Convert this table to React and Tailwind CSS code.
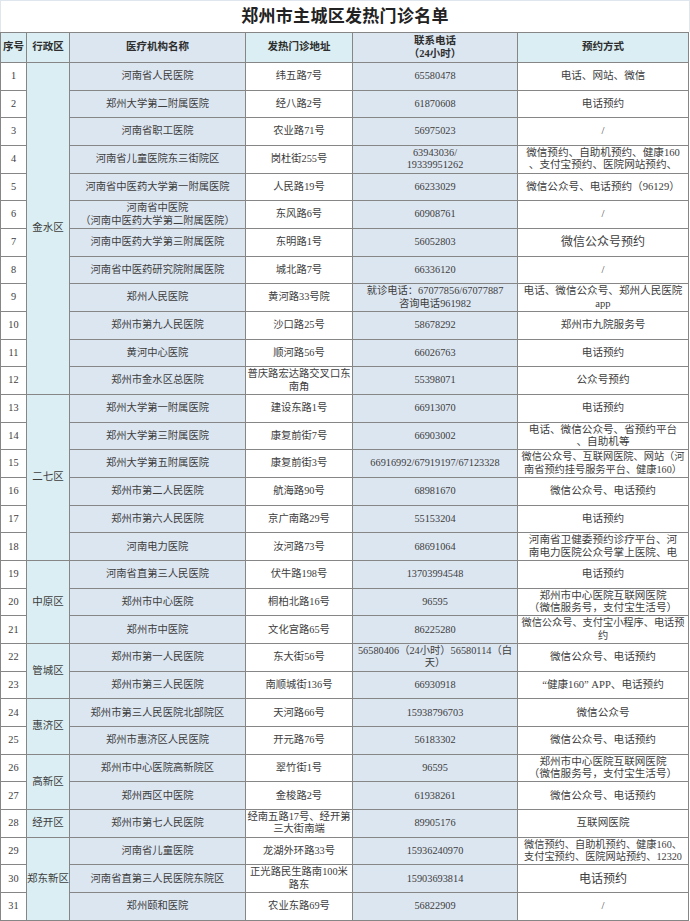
import React from 'react';

const rows = [
  { n: 1, name: '河南省人民医院', addr: '纬五路7号', tel: '65580478', way: '电话、网站、微信' },
  { n: 2, name: '郑州大学第二附属医院', addr: '经八路2号', tel: '61870608', way: '电话预约' },
  { n: 3, name: '河南省职工医院', addr: '农业路71号', tel: '56975023', way: '/' },
  { n: 4, name: '河南省儿童医院东三街院区', addr: '岗杜街255号', tel: ['63943036/', '19339951262'], way: ['微信预约、自助机预约、健康160', '、支付宝预约、医院网站预约、'] },
  { n: 5, name: '河南省中医药大学第一附属医院', addr: '人民路19号', tel: '66233029', way: '微信公众号、电话预约（96129）' },
  { n: 6, name: ['河南省中医院', '（河南中医药大学第二附属医院）'], addr: '东风路6号', tel: '60908761', way: '/' },
  { n: 7, name: '河南中医药大学第三附属医院', addr: '东明路1号', tel: '56052803', way: '微信公众号预约', big: true },
  { n: 8, name: '河南省中医药研究院附属医院', addr: '城北路7号', tel: '66336120', way: '/' },
  { n: 9, name: '郑州人民医院', addr: '黄河路33号院', tel: ['就诊电话：67077856/67077887', '咨询电话961982'], way: ['电话、微信公众号、郑州人民医院', 'app'] },
  { n: 10, name: '郑州市第九人民医院', addr: '沙口路25号', tel: '58678292', way: '郑州市九院服务号' },
  { n: 11, name: '黄河中心医院', addr: '顺河路56号', tel: '66026763', way: '电话预约' },
  { n: 12, name: '郑州市金水区总医院', addr: ['普庆路宏达路交叉口东', '南角'], tel: '55398071', way: '公众号预约' },
  { n: 13, name: '郑州大学第一附属医院', addr: '建设东路1号', tel: '66913070', way: '电话预约' },
  { n: 14, name: '郑州大学第三附属医院', addr: '康复前街7号', tel: '66903002', way: ['电话、微信公众号、省预约平台', '、自助机等'] },
  { n: 15, name: '郑州大学第五附属医院', addr: '康复前街3号', tel: '66916992/67919197/67123328', way: ['微信公众号、互联网医院、网站（河', '南省预约挂号服务平台、健康160）'], small: true },
  { n: 16, name: '郑州市第二人民医院', addr: '航海路90号', tel: '68981670', way: '微信公众号、电话预约' },
  { n: 17, name: '郑州市第六人民医院', addr: '京广南路29号', tel: '55153204', way: '电话预约' },
  { n: 18, name: '河南电力医院', addr: '汝河路73号', tel: '68691064', way: ['河南省卫健委预约诊疗平台、河', '南电力医院公众号掌上医院、电'] },
  { n: 19, name: '河南省直第三人民医院', addr: '伏牛路198号', tel: '13703994548', way: '电话预约' },
  { n: 20, name: '郑州市中心医院', addr: '桐柏北路16号', tel: '96595', way: ['郑州市中心医院互联网医院', '（微信服务号，支付宝生活号）'] },
  { n: 21, name: '郑州市中医院', addr: '文化宫路65号', tel: '86225280', way: ['微信公众号、支付宝小程序、电话预', '约'], small: true },
  { n: 22, name: '郑州市第一人民医院', addr: '东大街56号', tel: ['56580406（24小时）56580114（白', '天）'], way: '微信公众号、电话预约' },
  { n: 23, name: '郑州市第三人民医院', addr: '南顺城街136号', tel: '66930918', way: '“健康160” APP、电话预约' },
  { n: 24, name: '郑州市第三人民医院北部院区', addr: '天河路66号', tel: '15938796703', way: '微信公众号' },
  { n: 25, name: '郑州市惠济区人民医院', addr: '开元路76号', tel: '56183302', way: '微信公众号、电话预约' },
  { n: 26, name: '郑州市中心医院高新院区', addr: '翠竹街1号', tel: '96595', way: ['郑州市中心医院互联网医院', '（微信服务号，支付宝生活号）'] },
  { n: 27, name: '郑州西区中医院', addr: '金梭路2号', tel: '61938261', way: '微信公众号、电话预约' },
  { n: 28, name: '郑州市第七人民医院', addr: ['经南五路17号、经开第', '三大街南端'], tel: '89905176', way: '互联网医院' },
  { n: 29, name: '河南省儿童医院', addr: '龙湖外环路33号', tel: '15936240970', way: ['微信预约、自助机预约、健康160、', '支付宝预约、医院网站预约、12320'], small: true },
  { n: 30, name: '河南省直第三人民医院东院区', addr: ['正光路民生路南100米', '路东'], tel: '15903693814', way: '电话预约', big: true },
  { n: 31, name: '郑州颐和医院', addr: '农业东路69号', tel: '56822909', way: '/' },
];

const districts = {
  1: ['金水区', 12],
  13: ['二七区', 6],
  19: ['中原区', 3],
  22: ['管城区', 2],
  24: ['惠济区', 2],
  26: ['高新区', 2],
  28: ['经开区', 1],
  29: ['郑东新区', 3],
};

const Lines = ({ v }) =>
  (Array.isArray(v) ? v : [v]).map((l, i) => (
    <div key={i} className="whitespace-nowrap">
      {l}
    </div>
  ));

const cell = 'border border-[#868686] p-0 text-center align-middle overflow-hidden leading-[12.5px]';

const App = () => {
  return (
    <div className="w-[690px] h-[921px] bg-white font-['Liberation_Serif','Noto_Sans_CJK_SC',serif] text-[#3d3d3d] overflow-hidden">
      <div className="h-[32px] flex items-center justify-center border-t border-x border-[#dfe6ee]">
        <h1 className="text-[17px] font-bold text-[#222] tracking-[0.3px]">郑州市主城区发热门诊名单</h1>
      </div>
      <table className="table-fixed border-collapse w-[688px]">
        <colgroup>
          <col className="w-[26px]" />
          <col className="w-[43px]" />
          <col className="w-[176px]" />
          <col className="w-[107px]" />
          <col className="w-[165px]" />
          <col className="w-[171px]" />
        </colgroup>
        <thead>
          <tr className="h-[30px] text-[10.5px] font-bold text-[#2e2e2e]">
            <th className={`${cell} bg-[#daeef3]`}>序号</th>
            <th className={`${cell} bg-[#daeef3]`}>行政区</th>
            <th className={`${cell} bg-[#dce6f1]`}>医疗机构名称</th>
            <th className={`${cell} bg-[#daeef3]`}>发热门诊地址</th>
            <th className={`${cell} bg-[#dce6f1]`}>
              <Lines v={['联系电话', '（24小时）']} />
            </th>
            <th className={`${cell} bg-[#daeef3]`}>预约方式</th>
          </tr>
        </thead>
        <tbody>
          {rows.map((r) => {
            const d = districts[r.n];
            return (
              <tr key={r.n} className="h-[27.68px] text-[10.3px]">
                <td className={`${cell} bg-white`}>{r.n}</td>
                {d && (
                  <td rowSpan={d[1]} className={`${cell} bg-[#daeef3] text-[10.5px]`}>
                    {d[0]}
                  </td>
                )}
                <td className={`${cell} bg-[#dce6f1]`}>
                  <Lines v={r.name} />
                </td>
                <td className={`${cell} bg-white`}>
                  <Lines v={r.addr} />
                </td>
                <td className={`${cell} bg-[#dce6f1]`}>
                  <Lines v={r.tel} />
                </td>
                <td
                  className={`${cell} bg-white ${
                    r.big ? 'text-[12px]' : r.small ? 'text-[10.2px]' : 'text-[10.6px]'
                  }`}
                >
                  <Lines v={r.way} />
                </td>
              </tr>
            );
          })}
        </tbody>
      </table>
    </div>
  );
};

export default App;
